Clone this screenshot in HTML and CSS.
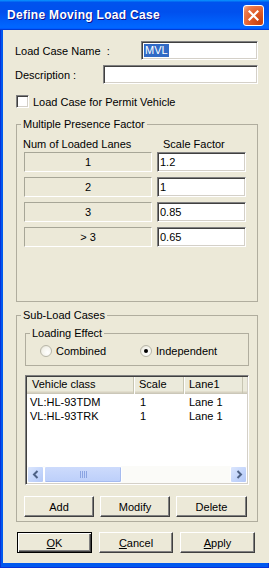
FILE: index.html
```html
<!DOCTYPE html>
<html lang="en">
<head>
  <meta charset="UTF-8">
  <title>Define Moving Load Case</title>
  <link rel="stylesheet" href="styles.css">
</head>
<body>
  <div class="window">
    <div class="titlebar">
      <span class="title">Define Moving Load Case</span>
      <button class="close" aria-label="Close">
        <svg width="11" height="11" viewBox="0 0 11 11"><path d="M1.5 1.5 L9.5 9.5 M9.5 1.5 L1.5 9.5" stroke="#fff" stroke-width="2.2" stroke-linecap="square"/></svg>
      </button>
    </div>
    <div class="frame">
      <div class="client">
        <div class="field-row name-row">
          <span>Load Case Name&nbsp; :</span>
          <div class="textbox name-box"><span class="selected">MVL</span></div>
        </div>
        <div class="field-row desc-row">
          <span>Description :</span>
          <div class="textbox desc-box"></div>
        </div>
        <div class="check-row">
          <span class="checkbox"></span>
          <span>Load Case for Permit Vehicle</span>
        </div>

        <fieldset class="group presence">
          <legend>Multiple Presence Factor</legend>
          <div class="factor-head">
            <span class="lanes-head">Num of Loaded Lanes</span>
            <span class="scale-head">Scale Factor</span>
          </div>
          <div class="factor-grid">
            <span class="static">1</span><div class="textbox">1.2</div>
            <span class="static">2</span><div class="textbox">1</div>
            <span class="static">3</span><div class="textbox">0.85</div>
            <span class="static">&gt; 3</span><div class="textbox">0.65</div>
          </div>
        </fieldset>

        <fieldset class="group subload">
          <legend>Sub-Load Cases</legend>
          <fieldset class="group effect">
            <legend>Loading Effect</legend>
            <div class="radio-row">
              <span class="radio"><span class="radio-mark"></span>Combined</span>
              <span class="radio checked"><span class="radio-mark"></span>Independent</span>
            </div>
          </fieldset>

          <div class="listview">
            <div class="lv-head">
              <span class="col-vehicle">Vehicle class</span>
              <span class="col-scale">Scale</span>
              <span class="col-lane">Lane1</span>
            </div>
            <div class="lv-body">
              <div class="lv-row"><span class="col-vehicle">VL:HL-93TDM</span><span class="col-scale">1</span><span class="col-lane">Lane 1</span></div>
              <div class="lv-row"><span class="col-vehicle">VL:HL-93TRK</span><span class="col-scale">1</span><span class="col-lane">Lane 1</span></div>
            </div>
            <div class="hscroll">
              <span class="sb-btn">
                <svg width="8" height="9" viewBox="0 0 8 9"><path d="M5.5 1 L2 4.5 L5.5 8" fill="none" stroke="#4d6185" stroke-width="2"/></svg>
              </span>
              <span class="sb-thumb"><span class="grip"></span></span>
              <span class="sb-track"></span>
              <span class="sb-btn">
                <svg width="8" height="9" viewBox="0 0 8 9"><path d="M2.5 1 L6 4.5 L2.5 8" fill="none" stroke="#4d6185" stroke-width="2"/></svg>
              </span>
            </div>
          </div>

          <div class="btn-row">
            <button class="btn">Add</button>
            <button class="btn">Modify</button>
            <button class="btn">Delete</button>
          </div>
        </fieldset>

        <div class="dialog-buttons">
          <button class="btn default"><u>O</u>K</button>
          <button class="btn"><u>C</u>ancel</button>
          <button class="btn"><u>A</u>pply</button>
        </div>
      </div>
    </div>
  </div>
</body>
</html>
```

FILE: styles.css
```css
/* Windows XP style dialog: Define Moving Load Case */
:root {
  --face:        #ece9d8;
  --frame:       #0058ee;
  --frame-edge:  #0831d9;
  --etch:        #b0ad9e;
  --shadow:      #808080;
  --dark:        #404040;
  --select:      #316ac5;
}

html, body {
  margin: 0;
  padding: 0;
}
body {
  background: var(--frame);
  font: 11px "Liberation Sans", Arial, sans-serif;
  color: #000;
}

.window {
  width: 269px;
  height: 568px;
  display: flex;
  flex-direction: column;
}

/* title bar */
.titlebar {
  height: 30px;
  flex: none;
  display: flex;
  align-items: flex-start;
  justify-content: space-between;
  background: linear-gradient(#0997ff 0%, #0053ee 8%, #0050ee 40%, #0066ff 88%, #0066ff 93%, #005bff 95%, #003dd7 96%, #003dd7 100%);
}
.title {
  padding: 8px 0 0 7px;
  color: #fff;
  font: bold 12px "Liberation Sans", Arial, sans-serif;
  text-shadow: 1px 1px #0f1089;
  letter-spacing: 0.3px;
}
.close {
  width: 21px;
  height: 21px;
  margin: 5px 5px 0 0;
  padding: 0;
  border: 1px solid #fff;
  border-radius: 3px;
  display: flex;
  align-items: center;
  justify-content: center;
  background: radial-gradient(circle at 85% 85%, #c8400e 0%, #e05a26 45%, #ec7d50 80%, #f7b79c 100%);
}

/* window frame */
.frame {
  flex: 1;
  display: flex;
  padding: 0 3px 4px 2px;
  border: 1px solid var(--frame-edge);
  border-top: 0;
  background: var(--frame);
}
.client {
  flex: 1;
  background: var(--face);
  padding: 11px 11px 0 12px;
}

/* sunken controls */
.textbox {
  box-sizing: border-box;
  height: 19px;
  background: #fff;
  border: 1px solid;
  border-color: var(--shadow) #fff #fff var(--shadow);
  box-shadow: inset 1px 1px var(--dark), inset -1px -1px #d4d0c8;
  padding: 0 2px;
  display: flex;
  align-items: center;
}
.selected {
  background: var(--select);
  color: #fff;
  padding: 0 1px;
  line-height: 13px;
}

.field-row {
  height: 19px;
  display: flex;
  align-items: center;
  justify-content: space-between;
}
.desc-row {
  margin-top: 5px;
}
.name-box {
  width: 117px;
}
.desc-box {
  width: 155px;
}

.check-row {
  margin: 11px 0 0 1px;
  height: 13px;
  display: flex;
  align-items: center;
  gap: 4px;
}
.checkbox {
  box-sizing: border-box;
  width: 13px;
  height: 13px;
  background: #fff;
  border: 1px solid;
  border-color: var(--shadow) #fff #fff var(--shadow);
  box-shadow: inset 1px 1px var(--dark), inset -1px -1px #d4d0c8;
}

/* group boxes */
.group {
  margin: 0 0 0 1px;
  border: 1px solid var(--etch);
  min-inline-size: 0;
}
.group legend {
  padding: 0 2px;
  line-height: 13px;
}

.presence {
  margin-top: 10px;
  padding: 7px 8px 54px 7px;
}
.presence legend {
  margin-left: -3px;
}
.factor-head {
  height: 13px;
  line-height: 13px;
  display: flex;
}
.lanes-head {
  width: 140px;
  margin-left: -1px;
}
.factor-grid {
  margin-top: 1px;
  display: grid;
  grid-template-columns: 128px 89px;
  grid-auto-rows: 20px;
  gap: 5px;
}
.factor-grid .textbox {
  height: 20px;
}
.static {
  box-sizing: border-box;
  border: 1px solid;
  border-color: #a7a697 #fff #fff #a7a697;
  display: flex;
  align-items: center;
  justify-content: center;
}

.subload {
  margin-top: 7px;
  padding: 5px 8px 4px 8px;
}
.subload > legend {
  margin-left: -4px;
}
.effect {
  margin: 0;
  padding: 4px 8px 8px 14px;
}
.effect legend {
  margin-left: -10px;
}
.radio-row {
  height: 13px;
  display: flex;
  align-items: center;
}
.radio {
  display: flex;
  align-items: center;
  gap: 4px;
  width: 100px;
}
.radio-mark {
  box-sizing: border-box;
  width: 12px;
  height: 12px;
  border-radius: 50%;
  background: radial-gradient(circle at 65% 65%, #fff 0%, #f3f2ea 60%, #d8d6c8 100%);
  border: 1px solid #b8b6a8;
  display: flex;
  align-items: center;
  justify-content: center;
}
.radio.checked .radio-mark::after {
  content: "";
  width: 4px;
  height: 4px;
  border-radius: 50%;
  background: #000;
}

/* list view */
.listview {
  box-sizing: border-box;
  height: 110px;
  margin-top: 9px;
  background: #fff;
  border: 1px solid;
  border-color: var(--shadow) #fff #fff var(--shadow);
  box-shadow: inset 1px 1px var(--dark), inset -1px -1px #d4d0c8;
  padding: 1px;
  display: flex;
  flex-direction: column;
}
.lv-head {
  height: 17px;
  flex: none;
  display: flex;
  background: #ebeadb;
  box-shadow: inset 0 -1px #cbc7b8, inset 0 -2px #d6d2c2, inset 0 -3px #e2decd;
}
.lv-head span {
  box-sizing: border-box;
  line-height: 15px;
  border-right: 1px solid #c7c5b2;
  box-shadow: inset 1px 0 #fff;
}
.col-vehicle {
  width: 107px;
  padding-left: 5px;
}
.col-scale {
  width: 50px;
  padding-left: 5px;
}
.col-lane {
  width: 59px;
  padding-left: 5px;
}
.lv-head .col-vehicle {
  box-shadow: none;
}
.lv-body {
  flex: 1;
  padding-top: 1px;
}
.lv-row {
  display: flex;
  height: 14px;
  line-height: 14px;
}
.lv-row span {
  box-sizing: border-box;
}
.lv-row .col-vehicle {
  padding-left: 3px;
}
.lv-row .col-scale {
  padding-left: 6px;
}

.hscroll {
  height: 17px;
  flex: none;
  display: flex;
  background: #fbfbf8;
}
.sb-btn {
  box-sizing: border-box;
  width: 17px;
  height: 17px;
  border: 1px solid #fff;
  border-radius: 2px;
  background: linear-gradient(135deg, #dbe6fd 0%, #c2d4fb 60%, #b4c8f6 100%);
  display: flex;
  align-items: center;
  justify-content: center;
}
.sb-thumb {
  box-sizing: border-box;
  width: 78px;
  height: 17px;
  border: 1px solid #fff;
  border-radius: 2px;
  background: linear-gradient(#cddbfc, #bccffa);
  box-shadow: inset -1px -1px #a6bbef;
  display: flex;
  align-items: center;
  justify-content: center;
}
.grip {
  width: 7px;
  height: 7px;
  background: repeating-linear-gradient(90deg, #8aa4e2 0 1px, transparent 1px 2px);
}
.sb-track {
  flex: 1;
}

/* buttons */
.btn {
  box-sizing: border-box;
  height: 21px;
  margin: 0;
  padding: 0;
  background: var(--face);
  border: 1px solid;
  border-color: #fff var(--dark) var(--dark) #fff;
  box-shadow: inset -1px -1px var(--shadow);
  font: inherit;
  color: #000;
}
.btn.default {
  border-color: #000;
  box-shadow: inset 1px 1px #fff, inset -1px -1px var(--dark), inset -2px -2px var(--shadow);
}
.btn-row {
  margin: 11px 0 0 -1px;
  display: grid;
  grid-template-columns: 70px 70px 71px;
  gap: 6px;
}
.dialog-buttons {
  margin: 10px 0 0 2px;
  display: grid;
  grid-template-columns: 75px 74px 75px;
  gap: 7px;
}
```
